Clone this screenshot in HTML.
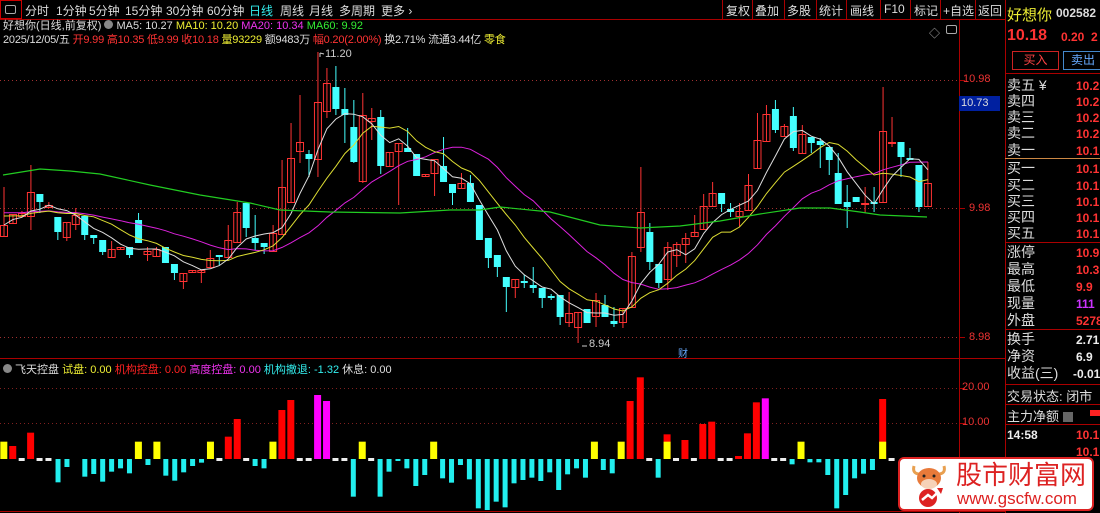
<!DOCTYPE html>
<html><head><meta charset="utf-8"><style>
*{margin:0;padding:0;box-sizing:border-box}
body{width:1100px;height:513px;background:#000;overflow:hidden;position:relative;font-family:"Liberation Sans","Noto Sans CJK SC",sans-serif;color:#ccc}
.a{position:absolute;white-space:nowrap}
.tb{font-size:12px;color:#ddd}
.rp{font-size:14px;color:#ddd}
.rv{font-size:12px;color:#f33;font-weight:bold}
</style></head><body>
<svg id="s" class="a" style="left:0;top:0" width="1100" height="513"></svg>

<div class="a tb" style="left:0;top:0;width:22px;height:19px;border:1px solid #c00"></div>
<div class="a" style="left:5px;top:5px;width:11px;height:9px;border:1px solid #aaa;border-radius:2px"></div>
<div class="a tb" style="left:25px;top:2px">分时</div>
<div class="a tb" style="left:56px;top:2px">1分钟</div>
<div class="a tb" style="left:89px;top:2px">5分钟</div>
<div class="a tb" style="left:125px;top:2px">15分钟</div>
<div class="a tb" style="left:166px;top:2px">30分钟</div>
<div class="a tb" style="left:207px;top:2px">60分钟</div>
<div class="a tb" style="left:249px;top:2px;color:#3ee">日线</div>
<div class="a tb" style="left:280px;top:2px">周线</div>
<div class="a tb" style="left:309px;top:2px">月线</div>
<div class="a tb" style="left:339px;top:2px">多周期</div>
<div class="a tb" style="left:381px;top:2px">更多 ›</div>
<div class="a tb" style="left:726px;top:2px">复权</div>
<div class="a tb" style="left:755px;top:2px">叠加</div>
<div class="a tb" style="left:787px;top:2px">多股</div>
<div class="a tb" style="left:819px;top:2px">统计</div>
<div class="a tb" style="left:850px;top:2px">画线</div>
<div class="a tb" style="left:884px;top:2px">F10</div>
<div class="a tb" style="left:914px;top:2px">标记</div>
<div class="a tb" style="left:943px;top:2px">+自选</div>
<div class="a tb" style="left:978px;top:2px">返回</div>

<div class="a" style="left:3px;top:17px;font-size:11px;color:#ddd">好想你(日线,前复权) <span style="display:inline-block;width:9px;height:9px;border-radius:50%;background:#888"></span> MA5: 10.27 <span style="color:#ee3">MA10: 10.20</span> <span style="color:#e3e">MA20: 10.34</span> <span style="color:#3e3">MA60: 9.92</span></div>
<div class="a" style="left:3px;top:31px;font-size:11px;letter-spacing:-0.2px;color:#ddd">2025/12/05/五 <span style="color:#f33">开9.99 高10.35 低9.99 收10.18</span> <span style="color:#ee3">量93229</span> 额9483万 <span style="color:#f33">幅0.20(2.00%)</span> 换2.71% 流通3.44亿 <span style="color:#ee3">零食</span></div>

<div class="a" style="left:929px;top:25px;color:#aaa;font-size:11px">◇</div>
<div class="a" style="left:946px;top:25px;width:11px;height:9px;border:1px solid #aaa;border-radius:2px"></div>

<div class="a" style="left:963px;top:73px;font-size:11px;color:#e33">10.98</div>
<div class="a" style="left:959px;top:96px;width:41px;height:15px;background:#0020a0"></div>
<div class="a" style="left:961px;top:97px;font-size:11px;color:#ddd">10.73</div>
<div class="a" style="left:969px;top:202px;font-size:11px;color:#e33">9.98</div>
<div class="a" style="left:969px;top:331px;font-size:11px;color:#e33">8.98</div>
<div class="a" style="left:962px;top:381px;font-size:11px;color:#e33">20.00</div>
<div class="a" style="left:962px;top:416px;font-size:11px;color:#e33">10.00</div>
<div class="a" style="left:325px;top:48px;font-size:11px;color:#ccc">11.20</div>
<div class="a" style="left:589px;top:338px;font-size:11px;color:#ccc">8.94</div>
<div class="a" style="left:678px;top:345px;font-size:10px;color:#6af">财</div>

<div class="a" style="left:3px;top:361px;font-size:11px;color:#ddd"><span style="display:inline-block;width:9px;height:9px;border-radius:50%;background:#888"></span> 飞天控盘 <span style="color:#ee3">试盘: 0.00</span> <span style="color:#f22">机构控盘: 0.00</span> <span style="color:#e3e">高度控盘: 0.00</span> <span style="color:#3ee">机构撤退: -1.32</span> 休息: 0.00</div>

<!-- right panel -->
<div class="a" style="left:1007px;top:4px;font-size:15px;color:#ee3">好想你</div>
<div class="a" style="left:1056px;top:6px;font-size:12px;color:#ddd;font-weight:bold">002582</div>
<div class="a" style="left:1007px;top:27px;font-size:16px;color:#f33;font-weight:bold">10.18</div>
<div class="a" style="left:1061px;top:30px;font-size:12px;color:#f33;font-weight:bold">0.20&nbsp; 2</div>
<div class="a" style="left:1012px;top:51px;width:47px;height:19px;border:1px solid #c22;font-size:12px;color:#f44;text-align:center;line-height:17px">买入</div>
<div class="a" style="left:1063px;top:51px;width:40px;height:19px;border:1px solid #48c;font-size:12px;color:#6af;text-align:center;line-height:17px">卖出</div>
<div id="rp"></div>

<div class="a" style="left:898px;top:457px;width:196px;height:54px;background:#fff;border:2px solid #d22;border-radius:6px"></div>
<svg class="a" style="left:908px;top:462px" width="42" height="46"><path d="M6 4 Q4 12 12 12 M36 4 Q38 12 30 12" stroke="#e8a050" stroke-width="3" fill="none"/><ellipse cx="21" cy="16" rx="12" ry="10" fill="#e87a3a"/><ellipse cx="21" cy="22" rx="8" ry="5" fill="#f6d2b8"/><circle cx="16" cy="14" r="1.5" fill="#222"/><circle cx="26" cy="14" r="1.5" fill="#222"/><circle cx="20" cy="36" r="9" fill="#d22"/><path d="M14 38 L20 33 L24 36 L32 28" stroke="#fff" stroke-width="2.5" fill="none"/><path d="M29 26 L35 26 L33 32Z" fill="#d22"/></svg>
<div class="a" style="left:956px;top:459px;font-size:26px;color:#d22;font-family:'Noto Sans CJK SC',sans-serif;line-height:30px">股市财富网</div>
<div class="a" style="left:957px;top:489px;font-size:17px;color:#d22;line-height:19px">www.gscfw.com</div>

<script>
const S=document.getElementById('s');let h='';
function L(x1,y1,x2,y2,c,w,d){h+=`<line x1="${x1}" y1="${y1}" x2="${x2}" y2="${y2}" stroke="${c}" stroke-width="${w||1}" ${d?'stroke-dasharray="'+d+'"':''}/>`}
function R(x,y,w,hh,f,st){h+=`<rect x="${x}" y="${y}" width="${w}" height="${hh}" fill="${f}" ${st?'stroke="'+st+'"':''}/>`}
L(0,19.5,1005,19.5,'#a00');L(959.5,19,959.5,513,'#a00');L(1005.5,0,1005.5,513,'#a00');
L(0,358.5,1005,358.5,'#a00');L(0,511.5,1005,511.5,'#a00');
[722,752,784,816,846,880,910,940,975].forEach(x=>L(x+.5,0,x+.5,19,'#a00'));
[80,208,337].forEach(y=>{L(0,y+.5,959,y+.5,'#a03030',1,'1 3');L(959,y+.5,965,y+.5,'#a00')});
[388,423].forEach(y=>{L(0,y+.5,959,y+.5,'#802020',1,'1 3');L(959,y+.5,965,y+.5,'#a00')});
[[73,'#a00'],[158,'#c84'],[242,'#a00'],[329,'#a00'],[384,'#a00'],[404,'#a00'],[424,'#a00']].forEach(a=>L(1005,a[0]+.5,1100,a[0]+.5,a[1]));
const C=[['r',225,237,187,237],['r',214,224,214,224],['r',213,217,211,217],['r',192,217,165,230],['c',194,202,194,213],['r',205,208,202,208],['c',217,232,217,240],['r',222,238,222,241],['r',215,225,208,230],['c',216,235,216,240],['c',235,238,235,244],['c',240,252,240,255],['r',249,258,241,258],['r',247,250,247,250],['c',247,255,247,258],['c',220,243,213,243],['r',251,255,247,261],['r',249,257,247,257],['c',247,263,247,263],['c',264,273,264,280],['r',273,282,273,289],['r',270,273,270,273],['r',270,273,270,283],['r',258,268,250,268],['c',255,257,255,265],['r',240,258,225,258],['r',212,243,202,243],['c',203,228,203,237],['c',238,243,215,250],['c',243,247,243,254],['r',233,252,225,252],['r',187,235,160,235],['r',158,203,123,203],['r',142,152,95,163],['c',154,159,150,177],['r',102,160,52,177],['r',83,112,68,118],['c',87,109,66,115],['c',109,115,88,143],['c',127,162,100,163],['r',115,182,93,183],['r',118,122,108,140],['c',117,166,110,174],['r',152,167,152,167],['r',143,152,143,205],['c',148,152,128,152],['c',154,176,154,176],['r',174,177,174,177],['r',159,174,159,196],['c',166,182,137,182],['c',184,193,184,205],['r',183,189,173,189],['c',183,202,175,202],['c',205,240,205,240],
['c',238,258,238,268],['c',255,267,255,277],['c',277,287,277,312],['r',279,288,279,298],['c',281,283,275,288],['c',285,288,267,293],['c',288,298,288,308],['c',296,298,294,300],['c',295,317,295,325],['r',313,323,292,327],['r',312,328,312,343],['c',309,323,309,323],['r',300,317,293,327],['c',305,317,295,317],['c',321,324,307,327],['r',308,323,308,328],['r',256,308,252,308],['r',212,248,167,252],['c',232,262,223,270],['c',264,283,264,288],['r',247,280,242,290],['r',244,256,242,267],['r',238,245,233,263],['r',232,237,215,237],['r',206,230,194,230],['r',193,207,182,207],['c',193,204,193,212],['c',209,212,203,217],['r',211,217,203,227],['r',185,211,174,211],['r',140,169,113,169],['r',114,142,105,142],['c',109,130,100,133],['r',126,137,124,137],['c',116,148,107,151],['r',134,154,125,154],['c',137,143,137,153],['c',141,145,138,168],['c',147,160,147,175],['c',173,204,153,204],['c',202,207,185,228],['c',197,202,197,202],['r',203,205,187,213],['c',202,204,187,212],['r',131,203,87,203],['r',142,143,117,147],['c',142,157,142,177],['c',158,160,148,160],['c',165,207,165,212],['r',183,207,162,207]];
const X=i=>4+i*8.97;
C.forEach((c,i)=>{const x=X(i);const col=c[0]=='r'?'#f33':'#4ff';L(x,c[3],x,c[4],col);
 if(c[0]=='r'){R(x-3.5,c[1]+.5,7,Math.max(c[2]-c[1]-1,1),'none',col)}else R(x-3.5,c[1],7,Math.max(c[2]-c[1],1.5),col)});
const cl=C.map(c=>c[0]=='r'?c[1]:c[2]);
function ma(n,col){let p=[];for(let i=0;i<cl.length;i++){let s=0,k=0;for(let j=Math.max(0,i-n+1);j<=i;j++){s+=cl[j];k++}
 let v=s/k;if(n==20&&i<19)v=(v*k+212*(20-k))/20;if(n==10&&i<9)v=(v*k+215*(10-k))/10;p.push(X(i).toFixed(1)+','+v.toFixed(1))}
 h+=`<polyline points="${p.join(' ')}" fill="none" stroke="${col}" stroke-width="1"/>`}
ma(20,'#d2d');ma(10,'#dd3');ma(5,'#ddd');
h+=`<polyline points="3,175 40,169 70,171 100,174 150,185 200,195 250,203 280,210 330,212 400,213 450,210 480,210 500,207 550,212 600,225 640,228 680,226 720,221 760,214 800,208 830,208 860,212 880,215 927,217" fill="none" stroke="#2c2" stroke-width="1.2"/>`;
L(320,53,320,57,'#ccc');L(320,53,324,54,'#ccc');L(582,346,587,346,'#ccc');
const B=[[6,'y',260],[20,'r',273],[34,'w'],[48,'r',233],[62,'w'],[76,'w'],[91,'c',382],[105,'c',336],[133,'c',365],[147,'c',357],[161,'c',380],[175,'c',350],[189,'c',340],[203,'c',355],[217,'y',260],[232,'c',330],[246,'y',260],[260,'c',362],[274,'c',377],[288,'c',352],[302,'c',333],[316,'c',323],[330,'y',260],[344,'w'],[358,'r',245],[372,'r',192],[386,'w'],[400,'c',333],[414,'c',340],[428,'y',260],[442,'r',165],[456,'r',135],[470,'w'],[484,'w'],[498,'m',120],[512,'m',138],[526,'w'],[540,'w'],[554,'c',425],[568,'y',260],[582,'w'],[596,'c',425],[610,'c',350],[624,'c',318],[638,'c',340],[652,'c',393],[666,'c',360],[680,'y',260],[694,'c',370],[708,'c',383],[722,'c',330],[736,'c',373],[750,'c',460],[764,'c',465],[778,'c',440],[792,'c',457],[806,'c',385],[820,'c',375],[834,'c',368],[848,'c',378],[862,'c',352],[876,'c',405],[890,'c',358],[904,'c',340],[918,'c',368],[932,'y',260],[946,'c',345],[960,'c',355],[974,'y',260],[988,'r',138],[1004,'r',67],[1018,'w'],[1032,'c',368],[1046,'ry',238],[1060,'w'],[1074,'r',255],[1088,'w'],[1102,'r',207],[1116,'r',200],[1130,'w'],[1144,'w'],[1158,'r',303],[1172,'r',235],[1186,'r',142],[1200,'m',130],[1214,'w'],[1228,'w'],[1242,'c',328],[1256,'y',260],[1270,'c',322],[1284,'c',322],[1298,'c',360],[1312,'c',460],[1326,'c',420],[1340,'c',370],[1354,'c',356],[1368,'c',345],[1384,'ry',132],[1398,'w']];
const Z=459,cy=v=>355+v/3;
B.forEach(b=>{const x=b[0]/1.568;const t=b[1];
 if(t=='w')R(x-3,Z-1,6,3,'#eee');
 else if(t=='c')R(x-2.5,Z,5,cy(b[2])-Z,'#2ee');
 else{const col={y:'#ff0',r:'#f00',m:'#f0f',ry:'#f00'}[t];const top=cy(b[2]);R(x-3.5,top,7,Z-top,col);if(t=='ry')R(x-3.5,cy(260),7,Z-cy(260),'#ff0')}});
S.innerHTML=h;
const rows=[[77,'卖五 ¥','10.2','#f33'],[93,'卖四','10.2','#f33'],[109,'卖三','10.2','#f33'],[125,'卖二','10.2','#f33'],[142,'卖一','10.1','#f33'],
[160,'买一','10.1','#f33'],[177,'买二','10.1','#f33'],[193,'买三','10.1','#f33'],[209,'买四','10.1','#f33'],[225,'买五','10.1','#f33'],
[244,'涨停','10.9','#f33'],[261,'最高','10.3','#f33'],[278,'最低','9.9','#f33'],[295,'现量','111','#c3f'],[312,'外盘','5278','#f33'],
[331,'换手','2.71','#eee'],[348,'净资','6.9','#eee'],[365,'收益(三)','-0.01','#eee']];
let r='';rows.forEach(a=>{r+=`<div class="a rp" style="left:1007px;top:${a[0]}px;line-height:16px">${a[1]}</div><div class="a rv" style="left:${a[2].length>4?1073:1076}px;top:${a[0]+2}px;color:${a[3]}">${a[2]}</div>`});
r+=`<div class="a rp" style="left:1007px;top:386px;font-size:13px">交易状态: 闭市</div>`;
r+=`<div class="a rp" style="left:1007px;top:406px;font-size:13px">主力净额 <span style="display:inline-block;width:10px;height:10px;background:#666;vertical-align:-1px"></span></div>`;
r+=`<div class="a" style="left:1090px;top:410px;width:10px;height:6px;background:#f22"></div>`;
r+=`<div class="a" style="left:1007px;top:428px;font-size:12px;color:#eee;font-weight:bold">14:58</div><div class="a rv" style="left:1076px;top:428px">10.1</div><div class="a rv" style="left:1076px;top:445px">10.1</div>`;
document.getElementById('rp').innerHTML=r;
</script>
</body></html>
